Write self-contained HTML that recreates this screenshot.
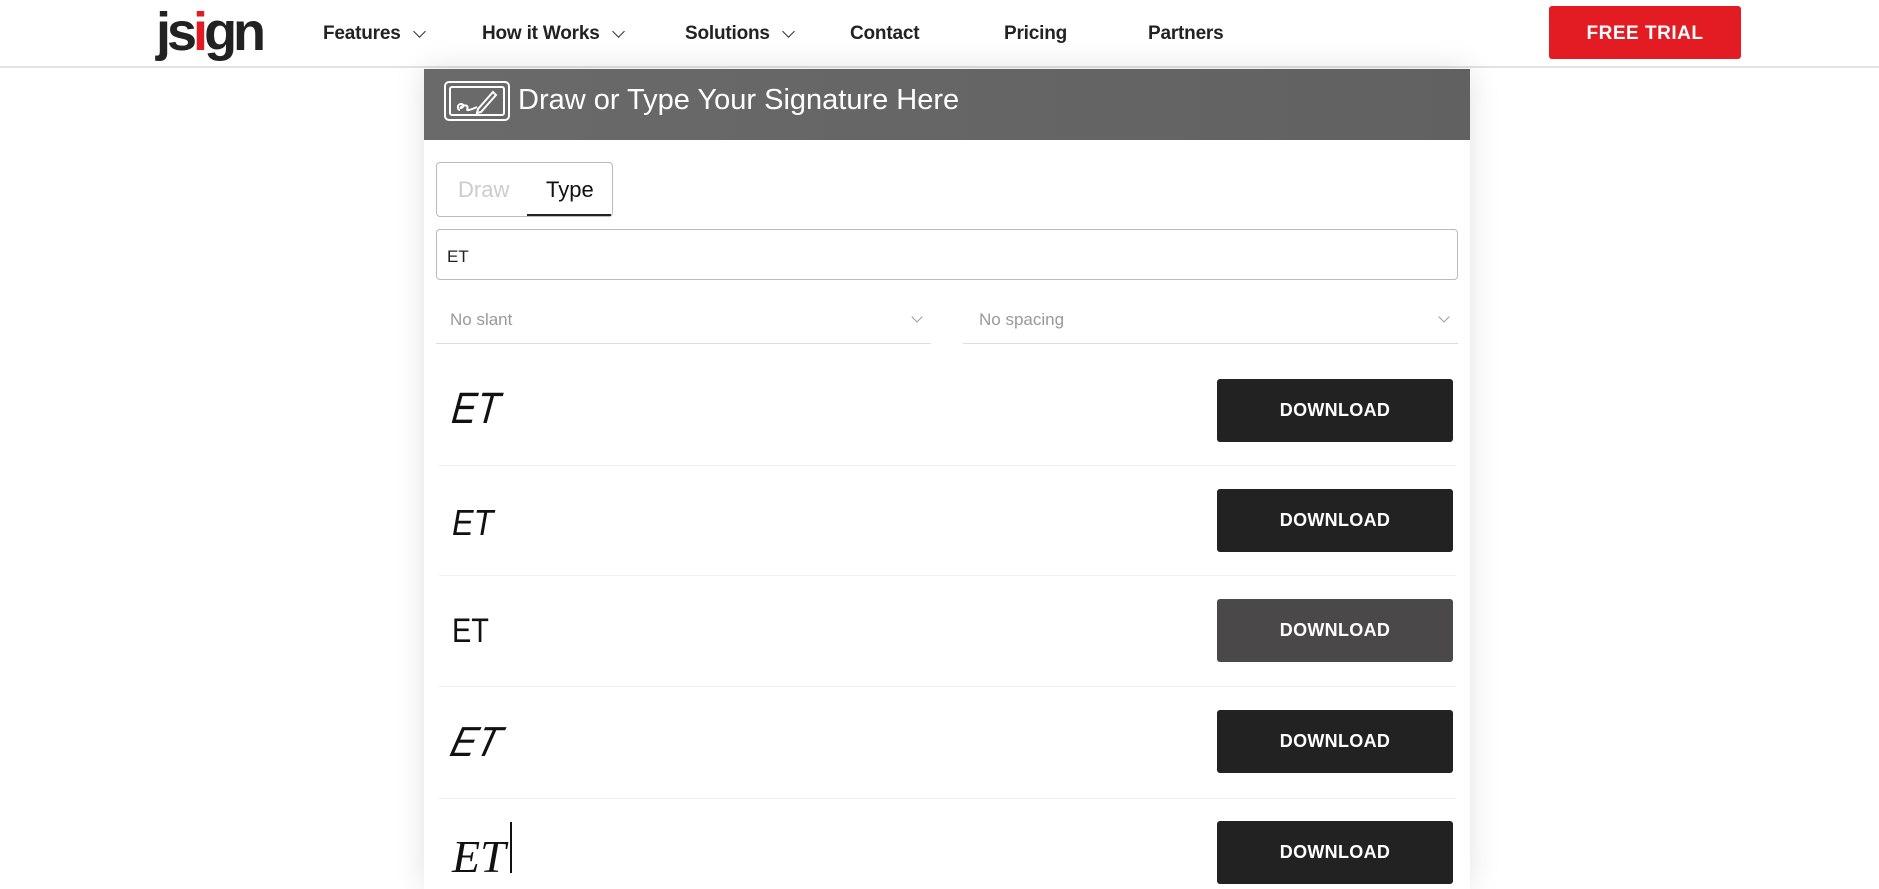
<!DOCTYPE html>
<html><head><meta charset="utf-8"><style>
*{margin:0;padding:0;box-sizing:border-box}
body{width:1879px;height:873px;overflow:hidden;background:#fff;font-family:"Liberation Sans",sans-serif;position:relative}
.a{position:absolute}
.hdr{left:0;top:0;width:1879px;height:68px;border-bottom:2px solid #e2e2e2;background:#fff}
.nav{top:23px;font-size:19px;font-weight:bold;color:#222;letter-spacing:-0.2px}
.chev{display:inline-block;width:9px;height:9px;border-right:1.5px solid #333;border-bottom:1.5px solid #333;transform:rotate(45deg);margin-left:14px;position:relative;top:-3px}
.card{left:424px;top:69px;width:1046px;height:820px;background:#fff;box-shadow:0 0 30px rgba(0,0,0,0.12)}
.dl{left:1217px;width:236px;height:63px;background:#222;color:#fff;font-weight:bold;font-size:18px;border-radius:3px;text-align:center;line-height:63px;letter-spacing:0.3px}
.sep{left:439px;width:1017px;height:1px;background:#f0f0f0}
.sig{left:452px;color:#111;font-style:italic}
</style></head><body>
<div class="a hdr"></div>
<div class="a" style="left:156px;top:2px;font-size:54px;font-weight:bold;color:#222;letter-spacing:-4px;line-height:60px">js<span style="color:#e31b23">i</span>gn</div>
<div class="a nav" style="left:323px">Features<span class="chev"></span></div>
<div class="a nav" style="left:482px">How it Works<span class="chev"></span></div>
<div class="a nav" style="left:685px">Solutions<span class="chev"></span></div>
<div class="a nav" style="left:850px">Contact</div>
<div class="a nav" style="left:1004px">Pricing</div>
<div class="a nav" style="left:1148px">Partners</div>
<div class="a" style="left:1549px;top:6px;width:192px;height:53px;background:#e31b23;border-radius:3px;color:#fff;font-weight:bold;font-size:19px;text-align:center;line-height:55px;letter-spacing:0.5px">FREE TRIAL</div>

<div class="a card"></div>
<div class="a" style="left:424px;top:69px;width:1046px;height:71px;background:linear-gradient(90deg,#6a6a6a,#616161)"></div>
<svg class="a" style="left:443px;top:80px" width="70" height="42" viewBox="0 0 70 42" fill="none" stroke="#fff" stroke-width="2">
<rect x="2" y="2" width="64" height="38" rx="4"/><rect x="7" y="7" width="54" height="28" rx="2"/>
<path d="M17 30c-3 0-3-6 1-6s2 4 0 4 4-4 6-2-2 5 2 4 6-2 8-3"/><path d="M35 29l15-17 3 3-15 17-4 1z"/></svg>
<div class="a" style="left:518px;top:84px;font-size:29px;color:#fff">Draw or Type Your Signature Here</div>

<div class="a" style="left:436px;top:162px;width:177px;height:55px;border:1px solid #bbb;border-radius:4px"></div>
<div class="a" style="left:458px;top:177px;font-size:22px;color:#ccc">Draw</div>
<div class="a" style="left:546px;top:177px;font-size:22px;color:#111">Type</div>
<div class="a" style="left:527px;top:214px;width:84px;height:2px;background:#222"></div>

<div class="a" style="left:436px;top:229px;width:1022px;height:51px;border:1px solid #bbb;border-radius:4px"></div>
<div class="a" style="left:447px;top:247px;font-size:17px;color:#222">ET</div>

<div class="a" style="left:450px;top:310px;font-size:17px;color:#999">No slant</div>
<div class="a" style="left:913px;top:313px;width:8px;height:8px;border-right:1.5px solid #999;border-bottom:1.5px solid #999;transform:rotate(45deg)"></div>
<div class="a" style="left:436px;top:343px;width:495px;height:1px;background:#ddd"></div>
<div class="a" style="left:979px;top:310px;font-size:17px;color:#999">No spacing</div>
<div class="a" style="left:1440px;top:313px;width:8px;height:8px;border-right:1.5px solid #999;border-bottom:1.5px solid #999;transform:rotate(45deg)"></div>
<div class="a" style="left:963px;top:343px;width:495px;height:1px;background:#ddd"></div>

<div class="a sig" style="top:384px;font-size:44px;font-family:'Liberation Sans';transform:skewX(-6deg) scaleX(0.85);transform-origin:left">ET</div>
<div class="a sig" style="top:502px;font-size:36px;font-family:'Liberation Sans';transform:scaleX(0.9);transform-origin:left">ET</div>
<div class="a sig" style="top:612px;font-size:34px;font-family:'Liberation Sans';font-style:normal;transform:scaleX(0.85);transform-origin:left">ET</div>
<div class="a sig" style="top:718px;font-size:42px;font-family:'Liberation Sans';transform:skewX(-15deg) scaleX(0.9);transform-origin:left">ET</div>
<div class="a sig" style="top:830px;font-size:46px;font-family:'Liberation Serif'">ET</div>
<div class="a" style="left:510px;top:822px;width:2px;height:51px;background:#111"></div>

<div class="a dl" style="top:379px">DOWNLOAD</div>
<div class="a sep" style="top:465px"></div>
<div class="a dl" style="top:489px">DOWNLOAD</div>
<div class="a sep" style="top:575px"></div>
<div class="a dl" style="top:599px;background:#4a4848">DOWNLOAD</div>
<div class="a sep" style="top:686px"></div>
<div class="a dl" style="top:710px">DOWNLOAD</div>
<div class="a sep" style="top:798px"></div>
<div class="a dl" style="top:821px">DOWNLOAD</div>
</body></html>
